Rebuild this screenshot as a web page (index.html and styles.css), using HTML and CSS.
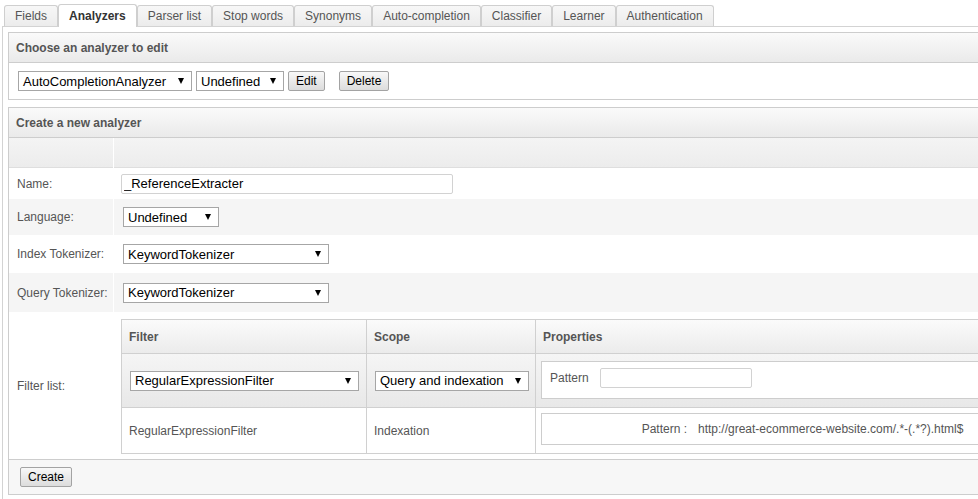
FILE: index.html
```html
<!DOCTYPE html>
<html lang="en">
<head>
<meta charset="utf-8">
<title>Analyzers</title>
<link rel="stylesheet" href="styles.css">
</head>
<body>
<div class="tabs">
  <ul class="tab-bar">
    <li class="tab">Fields</li>
    <li class="tab active">Analyzers</li>
    <li class="tab">Parser list</li>
    <li class="tab">Stop words</li>
    <li class="tab">Synonyms</li>
    <li class="tab">Auto-completion</li>
    <li class="tab">Classifier</li>
    <li class="tab">Learner</li>
    <li class="tab">Authentication</li>
  </ul>
  <div class="tab-content">
    <div class="panel">
      <div class="panel-head">Choose an analyzer to edit</div>
      <div class="edit-row">
        <div class="select w-analyzer"><span>AutoCompletionAnalyzer</span><i class="caret"></i></div>
        <div class="select w-undef"><span>Undefined</span><i class="caret"></i></div>
        <button class="btn">Edit</button>
        <button class="btn btn-delete">Delete</button>
      </div>
    </div>

    <div class="panel panel-create">
      <div class="panel-head">Create a new analyzer</div>
      <div class="form">
        <div class="fh"></div><div class="fh"></div>

        <div class="fl row-name">Name:</div>
        <div class="fv row-name"><input class="text name-input" type="text" value="_ReferenceExtracter"></div>

        <div class="fl row-lang alt">Language:</div>
        <div class="fv row-lang alt"><div class="select w-lang"><span>Undefined</span><i class="caret"></i></div></div>

        <div class="fl row-index">Index Tokenizer:</div>
        <div class="fv row-index"><div class="select w-tok"><span>KeywordTokenizer</span><i class="caret"></i></div></div>

        <div class="fl row-query alt">Query Tokenizer:</div>
        <div class="fv row-query alt"><div class="select w-tok"><span>KeywordTokenizer</span><i class="caret"></i></div></div>

        <div class="fl row-filter">Filter list:</div>
        <div class="fv row-filter filter-cell">
          <div class="ftable">
            <div class="fth">Filter</div>
            <div class="fth">Scope</div>
            <div class="fth">Properties</div>

            <div class="ftd edit"><div class="select w-filter"><span>RegularExpressionFilter</span><i class="caret"></i></div></div>
            <div class="ftd edit"><div class="select w-scope"><span>Query and indexation</span><i class="caret"></i></div></div>
            <div class="ftd edit props">
              <div class="propbox">
                <span class="prop-label">Pattern</span>
                <input class="text pattern-input" type="text" value="">
              </div>
            </div>

            <div class="ftd item">RegularExpressionFilter</div>
            <div class="ftd item">Indexation</div>
            <div class="ftd item props">
              <div class="propbox view">
                <span class="view-label">Pattern :</span>
                <span class="view-value">http://great-ecommerce-website.com/.*-(.*?).html$</span>
              </div>
            </div>
          </div>
        </div>
      </div>
      <div class="panel-foot"><button class="btn">Create</button></div>
    </div>
  </div>
</div>
</body>
</html>
```

FILE: styles.css
```css
html, body {
  margin: 0;
  padding: 0;
  overflow: hidden;
  background: #fff;
}

body {
  font-family: "Liberation Sans", Arial, sans-serif;
  font-size: 12px;
  color: #555;
}

.tabs {
  width: 1100px;
  margin-left: 2px;
}

/* ---------- tabs ---------- */
.tab-bar {
  display: flex;
  align-items: flex-end;
  list-style: none;
  margin: 0;
  padding: 4px 0 0 2px;
  height: 22px;
}

.tab {
  box-sizing: border-box;
  height: 21px;
  padding: 0 10px;
  display: flex;
  align-items: center;
  border: 1px solid #cfcfcf;
  border-bottom: none;
  border-radius: 3px 3px 0 0;
  background: linear-gradient(#f7f7f7, #ececec);
  color: #555;
}

.tab.active {
  height: 23px;
  margin-bottom: -1px;
  padding-bottom: 1px;
  background: #fff;
  font-weight: bold;
  color: #333;
  position: relative;
  z-index: 2;
}

.tab-content {
  border: 1px solid #d3d3d3;
  padding: 5px;
  min-height: 600px;
}

/* ---------- panels ---------- */
.panel {
  border: 1px solid #cdcdcd;
  background: #fff;
}

.panel + .panel {
  margin-top: 7px;
}

.panel-head {
  height: 29px;
  border-bottom: 1px solid #cdcdcd;
  background: linear-gradient(#fafafa, #eaeaea);
  font-weight: bold;
  color: #555;
  padding-left: 7px;
  display: flex;
  align-items: center;
}

.edit-row {
  height: 36px;
  display: flex;
  align-items: center;
  gap: 4px;
  padding-left: 9px;
}

.btn-delete {
  margin-left: 10px;
}

/* ---------- controls ---------- */
.select {
  box-sizing: border-box;
  height: 20px;
  display: flex;
  align-items: center;
  justify-content: space-between;
  padding: 0 7px 0 4px;
  border: 1px solid #a6a6a6;
  background: #fff;
  color: #000;
  font-size: 13px;
  white-space: nowrap;
}

.caret {
  width: 0;
  height: 0;
  border-left: 3px solid transparent;
  border-right: 3px solid transparent;
  border-top: 6px solid #000;
  flex: none;
}

.w-analyzer { width: 174px; }
.w-undef { width: 88px; }
.w-lang { width: 96px; margin-left: 2px; }
.w-tok { width: 206px; margin-left: 2px; }
.w-filter { width: 229px; margin-left: 1px; }
.w-scope { width: 154px; margin-left: 1px; }

.btn {
  box-sizing: border-box;
  height: 20px;
  padding: 0 7px;
  border: 1px solid #a3a3a3;
  border-radius: 2px;
  background: linear-gradient(#f8f8f8, #dcdcdc);
  font-family: "Liberation Sans", Arial, sans-serif;
  font-size: 12px;
  color: #000;
  line-height: 18px;
}

.text {
  box-sizing: border-box;
  height: 20px;
  border: 1px solid #d2d2d2;
  border-radius: 2px;
  padding: 0 2px;
  font-family: "Liberation Sans", Arial, sans-serif;
  font-size: 13px;
  color: #000;
  background: #fff;
  outline: none;
  margin: 0;
}

.name-input { width: 332px; }
.pattern-input { width: 152px; font-size: 12px; }

/* ---------- create form ---------- */
.form {
  display: grid;
  grid-template-columns: 104px 1fr;
  column-gap: 1px;
}

.fh {
  box-sizing: border-box;
  height: 30px;
  background: linear-gradient(#f4f4f4, #ececec);
  border-bottom: 1px solid #dedede;
}

.fl, .fv {
  display: flex;
  align-items: center;
}

.fl {
  padding-left: 8px;
  color: #555;
}

.fv {
  padding-left: 7px;
}

.alt {
  background: #f5f5f5;
}

.row-name { height: 31px; }
.row-lang { height: 36px; }
.row-index { height: 38px; }
.row-query { height: 39px; }
.row-filter { height: 147px; }

.filter-cell {
  align-items: flex-start;
  padding-top: 7px;
  box-sizing: border-box;
}

/* ---------- filter table ---------- */
.ftable {
  flex: 1;
  display: grid;
  grid-template-columns: 245px 169px 1fr;
  grid-template-rows: 34px 54px 46px;
  border-left: 1px solid #d0d0d0;
  border-top: 1px solid #d0d0d0;
}

.fth, .ftd {
  box-sizing: border-box;
  border-right: 1px solid #d0d0d0;
  border-bottom: 1px solid #d0d0d0;
  display: flex;
  align-items: center;
  padding-left: 7px;
}

.fth {
  background: linear-gradient(#fbfbfb, #ebebeb);
  font-weight: bold;
  color: #555;
}

.ftd.edit {
  background: linear-gradient(#f5f5f5, #e8e8e8);
}

.ftd.props {
  padding-left: 5px;
  padding-right: 6px;
  align-items: flex-start;
}

.ftd.edit.props { padding-top: 7px; }
.ftd.item.props { padding-top: 5px; }

.propbox {
  box-sizing: border-box;
  flex: 1;
  height: 38px;
  border: 1px solid #cdcdcd;
  background: #fff;
  display: flex;
  align-items: flex-start;
  padding: 6px 0 0 8px;
}

.prop-label {
  width: 50px;
  line-height: 20px;
  color: #555;
}

.propbox.view {
  height: 32px;
  padding: 0;
  align-items: center;
}

.view-label {
  width: 145px;
  text-align: right;
  color: #555;
}

.view-value {
  padding-left: 11px;
  color: #555;
}

/* ---------- footer ---------- */
.panel-foot {
  height: 34px;
  border-top: 1px solid #cdcdcd;
  background: #f7f7f7;
  display: flex;
  align-items: center;
  padding-left: 11px;
}
```
